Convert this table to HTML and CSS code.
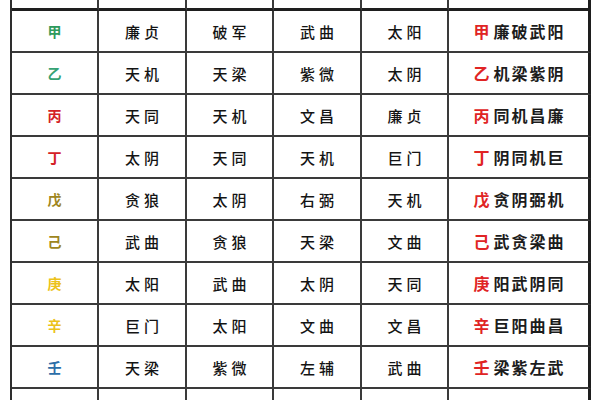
FILE: index.html
```html
<!DOCTYPE html>
<html lang="zh">
<head>
<meta charset="utf-8">
<link rel="stylesheet" href="styles.css">
</head>
<body>
<div class="sheet">
  <div class="grid">
    <div class="cell head"></div><div class="cell head"></div><div class="cell head"></div><div class="cell head"></div><div class="cell head"></div><div class="cell head"></div>

    <div class="cell stem green">甲</div><div class="cell">廉贞</div><div class="cell">破军</div><div class="cell">武曲</div><div class="cell">太阳</div><div class="cell sum"><span class="red">甲</span>廉破武阳</div>
    <div class="cell stem teal">乙</div><div class="cell">天机</div><div class="cell">天梁</div><div class="cell">紫微</div><div class="cell">太阴</div><div class="cell sum"><span class="red">乙</span>机梁紫阴</div>
    <div class="cell stem crimson">丙</div><div class="cell">天同</div><div class="cell">天机</div><div class="cell">文昌</div><div class="cell">廉贞</div><div class="cell sum"><span class="red">丙</span>同机昌廉</div>
    <div class="cell stem crimson">丁</div><div class="cell">太阴</div><div class="cell">天同</div><div class="cell">天机</div><div class="cell">巨门</div><div class="cell sum"><span class="red">丁</span>阴同机巨</div>
    <div class="cell stem olive">戊</div><div class="cell">贪狼</div><div class="cell">太阴</div><div class="cell">右弼</div><div class="cell">天机</div><div class="cell sum"><span class="red">戊</span>贪阴弼机</div>
    <div class="cell stem olive">己</div><div class="cell">武曲</div><div class="cell">贪狼</div><div class="cell">天梁</div><div class="cell">文曲</div><div class="cell sum"><span class="red">己</span>武贪梁曲</div>
    <div class="cell stem yellow">庚</div><div class="cell">太阳</div><div class="cell">武曲</div><div class="cell">太阴</div><div class="cell">天同</div><div class="cell sum"><span class="red">庚</span>阳武阴同</div>
    <div class="cell stem yellow">辛</div><div class="cell">巨门</div><div class="cell">太阳</div><div class="cell">文曲</div><div class="cell">文昌</div><div class="cell sum"><span class="red">辛</span>巨阳曲昌</div>
    <div class="cell stem blue">壬</div><div class="cell">天梁</div><div class="cell">紫微</div><div class="cell">左辅</div><div class="cell">武曲</div><div class="cell sum"><span class="red">壬</span>梁紫左武</div>
    <div class="cell"></div><div class="cell"></div><div class="cell"></div><div class="cell"></div><div class="cell"></div><div class="cell"></div>
  </div>
</div>
</body>
</html>
```

FILE: styles.css
```css
html, body {
  margin: 0;
  padding: 0;
  background: #ffffff;
  overflow: hidden;
}

.sheet {
  width: 600px;
  height: 400px;
  overflow: hidden;
  background: #ffffff;
}

.grid {
  margin-left: 10px;
  display: grid;
  grid-template-columns: 87px 88px 87px 88px 87px 142px;
  grid-template-rows: 11px repeat(10, 42px);
  border-left: 2px solid #2e2e2e;
  width: 579px;
  font-family: "Noto Sans CJK SC", "Noto Sans", sans-serif;
  color: #141414;
}

.cell {
  box-sizing: border-box;
  border-right: 2px solid #3a3a3a;
  border-bottom: 2px solid #3a3a3a;
  display: flex;
  align-items: center;
  justify-content: center;
  font-size: 15px;
  font-weight: 500;
  letter-spacing: 4px;
  text-indent: 4px;
  line-height: 1;
}

.cell:nth-child(6n) {
  border-right-color: #1e1e1e;
  border-right-width: 3px;
}

.head {
  border-bottom: 3px solid #1e1e1e;
}

.stem {
  font-weight: bold;
  font-size: 14px;
  letter-spacing: 0;
  text-indent: 0;
}

.green { color: #2e9a5c; }
.teal { color: #36a274; }
.crimson { color: #d42226; }
.olive { color: #9e861e; }
.yellow { color: #ecc21a; }
.blue { color: #2c6ea8; }

.sum {
  font-weight: bold;
  font-size: 16px;
  letter-spacing: 2px;
  text-indent: 2px;
  color: #1c1c1c;
}

.red {
  color: #e02424;
}
```
